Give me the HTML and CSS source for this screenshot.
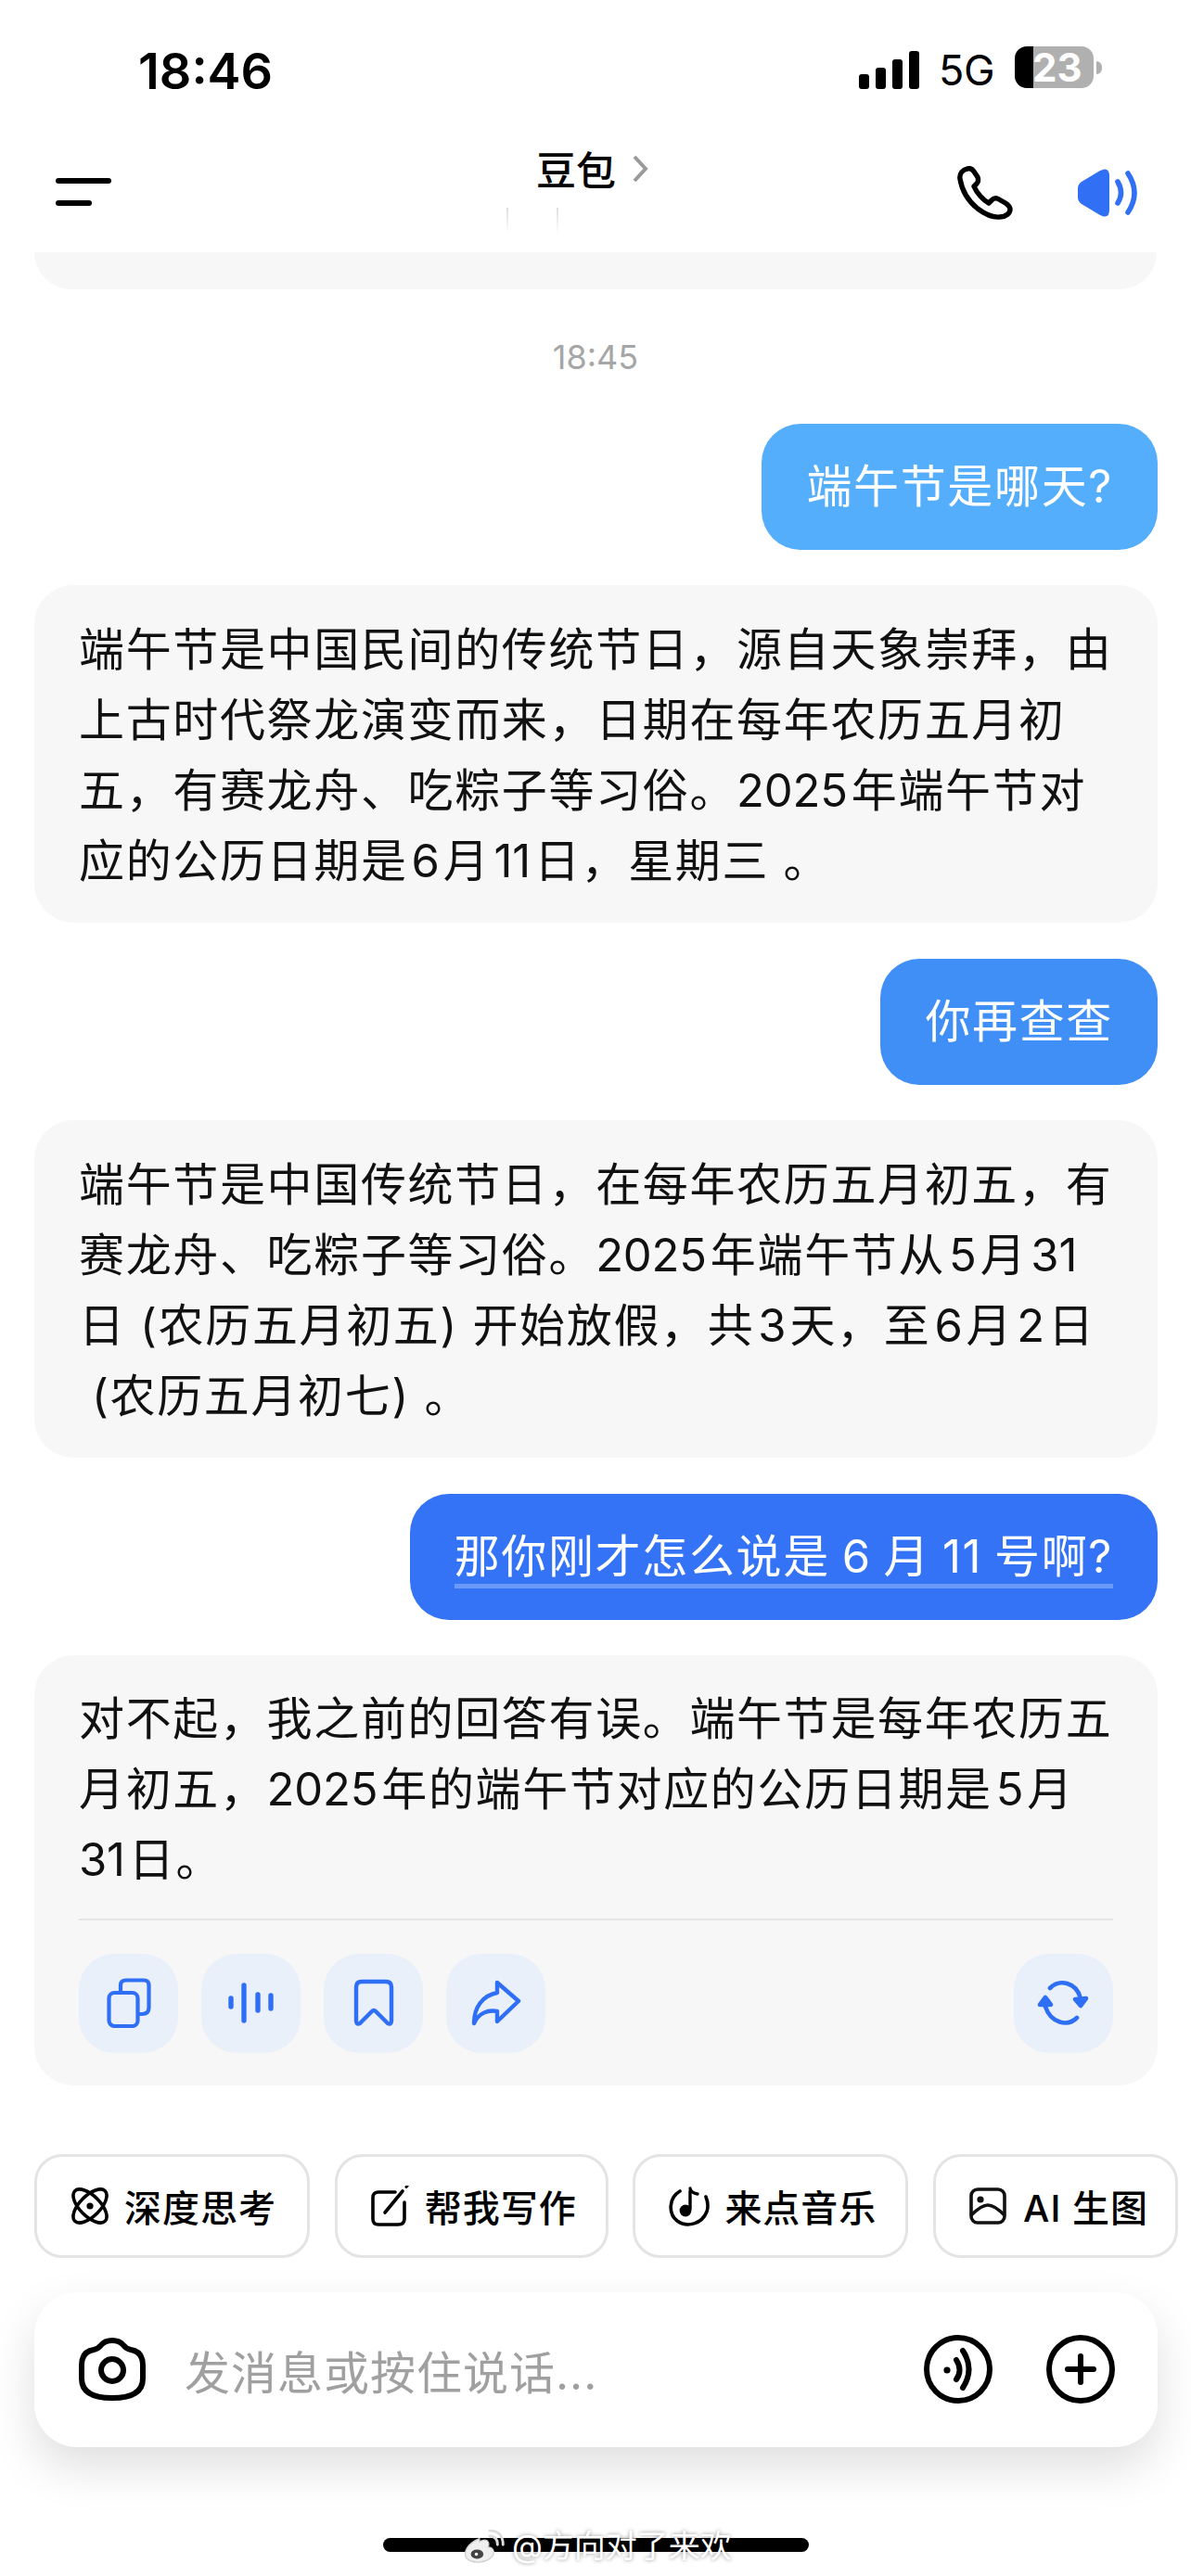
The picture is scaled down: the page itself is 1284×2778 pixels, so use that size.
FILE: index.html
```html
<!DOCTYPE html>
<html lang="zh-CN">
<head>
  <meta charset="UTF-8" />
  <meta name="viewport" content="width=device-width, initial-scale=1.0" />
  <title>豆包</title>
  <link rel="stylesheet" href="styles.css">
</head>
<body>
  <div class="phone">
    <div class="status-bar">
      <div class="clock">18:46</div>
      <div class="status-right">
        <div class="signal"><i class="s1"></i><i class="s2"></i><i class="s3"></i><i class="s4"></i></div>
        <div class="net">5G</div>
        <div class="battery">
          <div class="battery-body"><span class="battery-num">23</span></div>
          <div class="battery-tip"></div>
        </div>
      </div>
    </div>

    <div class="nav">
      <div class="menu"><i class="menu-long"></i><i class="menu-short"></i></div>
      <div class="title">
        <span>豆包</span>
        <svg class="chevron" width="18" height="30" viewBox="0 0 18 30"><path d="M3 2 L15 15 L3 28" fill="none" stroke="#9a9a9a" stroke-width="4"/></svg>
      </div>
      <div class="subtitle-marks"><i></i><i></i></div>
      <div class="nav-actions">
        <svg class="phone-icon" width="60" height="58" viewBox="0 0 60 58">
          <path d="M11 3 C6 4 2 8 3 14 C5 26 12 38 22 46 C30 52 38 56 46 55 C52 55 57 51 57 47 C57 44 55 42 52 40 L45 36 C42 34 39 35 37 37 L34 40 C28 37 21 29 18 22 L21 19 C23 17 23 15 22 12 L18 6 C16 3 14 2 11 3 Z" fill="none" stroke="#000" stroke-width="5.4" stroke-linejoin="round"/>
        </svg>
        <svg class="speaker-icon" width="64" height="52" viewBox="0 0 64 52">
          <path d="M4 14 L24 2 Q34 -3 34 8 V44 Q34 55 24 50 L4 38 Q0 35 0 31 V21 Q0 17 4 14 Z" fill="#3170f5"/>
          <path d="M43 14 Q50 26 43 37" fill="none" stroke="#3170f5" stroke-width="5.6" stroke-linecap="round"/>
          <path d="M54 5 Q68 26 54 47" fill="none" stroke="#3170f5" stroke-width="5.6" stroke-linecap="round"/>
        </svg>
      </div>
    </div>

    <div class="prev-bubble"></div>

    <div class="stamp">18:45</div>

    <div class="chat">
      <div class="msg user user-1">端午节是哪天?</div>
      <div class="msg bot">端午节是中国民间的传统节日，源自天象崇拜，由<br>上古时代祭龙演变而来，日期在每年农历五月初<br>五，有赛龙舟、吃粽子等习俗。<span class="num first">2025</span>年端午节对<br>应的公历日期是<span class="num">6</span>月<span class="num">11</span>日，星期三 。</div>
      <div class="msg user user-2">你再查查</div>
      <div class="msg bot">端午节是中国传统节日，在每年农历五月初五，有<br>赛龙舟、吃粽子等习俗。<span class="num first">2025</span>年端午节从<span class="num">5</span>月<span class="num">31</span><br>日 (农历五月初五) 开始放假，共<span class="num">3</span>天，至<span class="num">6</span>月<span class="num">2</span>日<br><span class="indent">(农历五月初七) 。</span></div>
      <div class="msg user user-3"><span class="underlined">那你刚才怎么说是 6 月 11 号啊?</span></div>
      <div class="msg bot last">
        <div>对不起，我之前的回答有误。端午节是每年农历五<br>月初五，<span class="num first">2025</span>年的端午节对应的公历日期是<span class="num">5</span>月<br><span class="num first">31</span>日。</div>
        <div class="msg-actions">
          <div class="tile">
            <svg width="48" height="54" viewBox="0 0 48 54" fill="none" stroke="#2f6ff5" stroke-width="4.2" stroke-linejoin="round">
              <rect x="2.5" y="16" width="31" height="36" rx="6"/>
              <path d="M15 16 V8 Q15 2.5 21 2.5 H40 Q45.5 2.5 45.5 8 V32 Q45.5 39 38 39 H33.5"/>
            </svg>
          </div>
          <div class="tile">
            <svg width="50" height="44" viewBox="0 0 50 44" fill="none" stroke="#2f6ff5" stroke-width="5.4" stroke-linecap="round">
              <path d="M3 17 V26 M17 3 V41 M32 13 V30 M46 14 V28"/>
            </svg>
          </div>
          <div class="tile">
            <svg width="44" height="52" viewBox="0 0 44 52" fill="none" stroke="#2f6ff5" stroke-width="4.4" stroke-linejoin="round" stroke-linecap="round">
              <path d="M3 9 Q3 3 9 3 H35 Q41 3 41 9 V45 Q41 50 37 48 L24 35 Q22 33 20 35 L7 48 Q3 50 3 45 Z"/>
            </svg>
          </div>
          <div class="tile">
            <svg width="54" height="50" viewBox="0 0 54 50" fill="none" stroke="#2f6ff5" stroke-width="4.4" stroke-linejoin="round" stroke-linecap="round">
              <path d="M28 3 L51 23 L28 45 V34 C18 32 8 36 3 47 C3 30 12 17 28 14 Z"/>
            </svg>
          </div>
          <div class="tile tile-end">
            <svg width="58" height="50" viewBox="0 0 58 50" fill="none" stroke="#2f6ff5" stroke-width="4.6" stroke-linecap="round" stroke-linejoin="round">
              <path d="M14 9 C24 -1 42 2 47 20"/>
              <path d="M43 41 C33 51 15 47 9 29"/>
              <path d="M53 20 L47 28 L41 21 Z" fill="#2f6ff5"/>
              <path d="M3 27 L9 19 L15 27 Z" fill="#2f6ff5"/>
            </svg>
          </div>
        </div>
      </div>
    </div>

    <div class="chips">
      <div class="chip">
        <svg width="42" height="42" viewBox="0 0 42 42" fill="none" stroke="#000" stroke-width="3.6">
          <ellipse cx="21" cy="21" rx="11" ry="23" transform="rotate(45 21 21)"/>
          <ellipse cx="21" cy="21" rx="11" ry="23" transform="rotate(-45 21 21)"/>
          <circle cx="21" cy="21" r="3.6" fill="#000" stroke="none"/>
        </svg>
        <span>深度思考</span>
      </div>
      <div class="chip">
        <svg width="42" height="44" viewBox="0 0 42 44" fill="none" stroke="#000" stroke-width="3.6" stroke-linecap="round">
          <path d="M26 7 H8 Q2 7 2 13 V36 Q2 42 8 42 H29 Q36 42 36 36 V18"/>
          <path d="M15 29 L34 6"/>
          <path d="M38 1.5 L39 0.5" stroke-width="3"/>
        </svg>
        <span>帮我写作</span>
      </div>
      <div class="chip">
        <svg width="44" height="44" viewBox="0 0 44 44" fill="none" stroke="#000" stroke-width="3.6" stroke-linecap="round">
          <path d="M12 6 C0 13 -1 30 9 38 C20 46 36 41 41 28 C43 22 42 17 40 12"/>
          <path d="M23 6 V25" stroke-width="3.4"/>
          <path d="M23 3 Q24 8 31 9" stroke-width="3.4"/>
          <circle cx="18" cy="27" r="6.4" fill="#000" stroke="none"/>
        </svg>
        <span>来点音乐</span>
      </div>
      <div class="chip chip-ai">
        <svg width="40" height="40" viewBox="0 0 40 40" fill="none" stroke="#111" stroke-width="3.6" stroke-linejoin="round">
          <rect x="2" y="2" width="36" height="36" rx="7"/>
          <circle cx="12" cy="13" r="3.6" fill="#111" stroke="none"/>
          <path d="M2 30 C10 22 15 19 20 19 C25 19 30 22 38 30"/>
        </svg>
        <span>AI 生图</span>
      </div>
    </div>

    <div class="input-bar">
      <svg class="cam" width="72" height="68" viewBox="0 0 72 68" fill="none" stroke="#000" stroke-width="6">
        <path d="M24 8 Q28 3 36 3 Q44 3 48 8 Q51 12 56 13 Q69 15 69 30 V44 Q69 65 36 65 Q3 65 3 44 V30 Q3 15 16 13 Q21 12 24 8 Z"/>
        <circle cx="36" cy="35" r="12"/>
      </svg>
      <div class="placeholder">发消息或按住说话...</div>
      <div class="input-actions">
        <svg width="74" height="74" viewBox="0 0 74 74" fill="none" stroke="#000" stroke-width="6" stroke-linecap="round">
          <circle cx="37" cy="37" r="34"/>
          <circle cx="25" cy="38" r="3.6" fill="#000" stroke="none"/>
          <path d="M35 27 Q42 38 35 48"/>
          <path d="M42 17 Q55 37 42 57"/>
        </svg>
        <svg width="74" height="74" viewBox="0 0 74 74" fill="none" stroke="#000" stroke-width="6" stroke-linecap="round">
          <circle cx="37" cy="37" r="34"/>
          <path d="M23 37 H51 M37 23 V51"/>
        </svg>
      </div>
    </div>

    <div class="home-bar"></div>

    <div class="watermark">
      <svg width="44" height="38" viewBox="0 0 52 44">
        <path d="M20 12 C8 16 1 26 2 33 C3 40 12 43 21 42 C31 41 39 35 38 28 C37 24 33 23 31 23 C33 18 31 14 27 14 C25 14 22 15 20 16 Z" fill="#efefef" stroke="#cfcfcf" stroke-width="1.5"/>
        <ellipse cx="17" cy="32" rx="8" ry="6" fill="#444"/>
        <circle cx="16" cy="32" r="2" fill="#fff"/>
        <path d="M33 9 Q43 9 43 20 M33 2 Q50 2 50 20" fill="none" stroke="#dcdcdc" stroke-width="3.4" stroke-linecap="round"/>
      </svg>
      <span>@方向对了来欢</span>
    </div>
  </div>
</body>
</html>
```

FILE: styles.css
```css
* {
  box-sizing: border-box;
}
html, body {
  margin: 0;
  padding: 0;
  background: #fff;
}
body {
  font-family: Inter, "Noto Sans CJK SC", sans-serif;
  color: #000;
}
.phone {
  position: relative;
  width: 1284px;
  height: 2778px;
  overflow: hidden;
  background: #fff;
}

/* status bar */
.status-bar {
  height: 130px;
  display: flex;
  justify-content: space-between;
  align-items: flex-start;
  padding: 48px 96px 0 149px;
}
.clock {
  font-size: 54px;
  font-weight: 600;
  line-height: 58px;
}
.status-right {
  display: flex;
  align-items: flex-start;
  padding-top: 5px;
}
.signal {
  display: flex;
  align-items: flex-end;
  gap: 7px;
  height: 43px;
  margin-right: 21px;
}
.signal i {
  display: block;
  width: 11px;
  border-radius: 3px;
  background: #000;
}
.s1 { height: 16px; }
.s2 { height: 23px; }
.s3 { height: 32px; }
.s4 { height: 41px; }
.net {
  font-size: 45px;
  line-height: 44px;
  margin-top: 1px;
  margin-right: 22px;
  letter-spacing: -0.5px;
}
.battery {
  display: flex;
  align-items: center;
  height: 45px;
  margin-top: -3px;
}
.battery-body {
  width: 85px;
  height: 45px;
  padding-left: 19px;
  border-radius: 13px;
  background: linear-gradient(90deg, #000 20px, #b0b0b0 20px);
}
.battery-num {
  display: block;
  font-size: 42px;
  line-height: 45px;
  font-weight: 700;
  color: #fff;
}
.battery-tip {
  width: 6px;
  height: 14px;
  margin-left: 3px;
  border-radius: 0 7px 7px 0;
  background: #b0b0b0;
}

/* nav */
.nav {
  position: relative;
  height: 142px;
}
.menu {
  position: absolute;
  left: 60px;
  top: 62px;
  display: flex;
  flex-direction: column;
  gap: 18px;
}
.menu i {
  display: block;
  height: 6px;
  border-radius: 3px;
  background: #000;
}
.menu-long { width: 60px; }
.menu-short { width: 39px; }
.title {
  position: absolute;
  left: 578px;
  top: 26px;
  display: flex;
  align-items: center;
  gap: 17px;
  font-size: 43px;
  line-height: 56px;
  font-weight: 500;
}
.chevron {
  margin-top: -4px;
}
.subtitle-marks {
  position: absolute;
  left: 546px;
  top: 94px;
  display: flex;
  gap: 52px;
}
.subtitle-marks i {
  display: block;
  width: 2px;
  height: 28px;
  background: linear-gradient(#dedede, #fff);
}
.nav-actions {
  position: absolute;
  left: 1032px;
  top: 49px;
  display: flex;
  align-items: flex-start;
  gap: 70px;
}
.speaker-icon {
  margin-top: 3px;
}

/* chat */
.prev-bubble {
  height: 40px;
  margin: 0 37px;
  border-radius: 0 0 42px 42px;
  background: #f7f7f7;
}
.stamp {
  margin-top: 56px;
  height: 34px;
  text-align: center;
  font-size: 36px;
  line-height: 34px;
  color: #a6a6a6;
}
.chat {
  display: flex;
  flex-direction: column;
  gap: 38.4px;
  margin-top: 55px;
  padding: 0 36px 0 37px;
}
.msg {
  font-size: 49px;
  line-height: 76px;
  letter-spacing: 1.65px;
  border-radius: 42px;
  padding: 30px 48px;
}
.bot {
  background: #f7f7f7;
  color: #111;
  white-space: nowrap;
  padding-top: 32px;
  padding-bottom: 28px;
}
.num {
  margin: 0 4px;
  letter-spacing: -0.2px;
}
.num.first {
  margin-left: 0;
}
.indent {
  margin-left: 14px;
}
.user {
  align-self: flex-end;
  color: #fff;
  white-space: nowrap;
}
.user-1 { background: #54aefb; }
.user-2 { background: #3f8ff6; }
.user-3 {
  background: #3573f6;
  word-spacing: -2.6px;
}
.underlined {
  display: inline-block;
  line-height: 64px;
  height: 69px;
  padding-top: 3px;
  border-bottom: 5px solid #6a9bfb;
}
.bot.last {
  padding-top: 31px;
  padding-bottom: 35px;
}
.msg-actions {
  display: flex;
  gap: 25px;
  margin-top: 25px;
  padding-top: 36px;
  border-top: 2px solid #e6e6e6;
}
.tile {
  width: 107px;
  height: 107px;
  border-radius: 38px;
  background: #eaf0fa;
  display: flex;
  align-items: center;
  justify-content: center;
}
.tile-end {
  margin-left: auto;
}

/* chips */
.chips {
  display: grid;
  grid-template-columns: 297px 295px 297px 264px;
  gap: 26.7px;
  margin-top: 74px;
  padding-left: 37px;
}
.chip {
  display: flex;
  align-items: center;
  gap: 16px;
  height: 112px;
  padding-left: 36px;
  border: 3px solid #e4e4e4;
  border-radius: 30px;
  font-size: 40px;
  letter-spacing: 1px;
  font-weight: 500;
  white-space: nowrap;
}
.chip-ai {
  gap: 18px;
}

/* input */
.input-bar {
  display: flex;
  align-items: center;
  height: 167px;
  margin: 37px 36px 0 37px;
  padding: 0 46px 0 48px;
  background: #fff;
  border-radius: 46px;
  box-shadow: 0 22px 50px rgba(0, 0, 0, 0.13);
}
.cam {
  flex: none;
}
.placeholder {
  margin-left: 42px;
  font-size: 49px;
  letter-spacing: 1px;
  color: #a0a0a0;
}
.input-actions {
  display: flex;
  gap: 58px;
  margin-left: auto;
}

/* bottom */
.home-bar {
  position: absolute;
  left: 413px;
  top: 2737px;
  width: 459px;
  height: 15px;
  border-radius: 8px;
  background: #000;
}
.watermark {
  position: absolute;
  left: 500px;
  top: 2724px;
  display: flex;
  align-items: center;
  gap: 8px;
  font-size: 34px;
  line-height: 44px;
  color: #fff;
  text-shadow: 0 0 4px rgba(0, 0, 0, 0.45);
}
```
